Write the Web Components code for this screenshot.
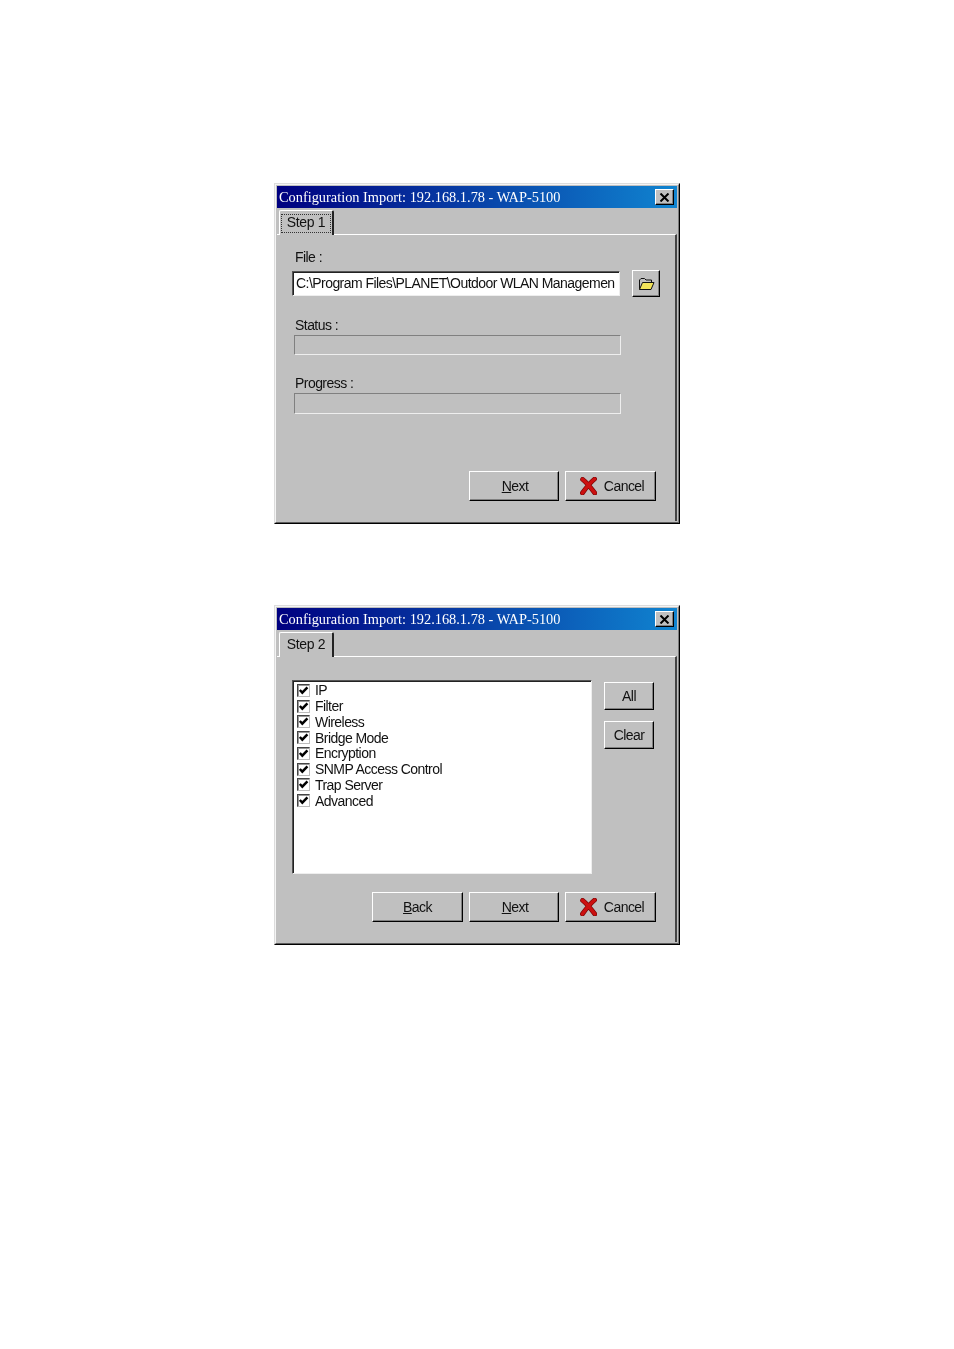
<!DOCTYPE html>
<html>
<head>
<meta charset="utf-8">
<style>
  html, body { margin: 0; background: #fff; }
  body { height: 1349px; font-family: "Liberation Sans", Arial, sans-serif; }
  .page { display: flex; flex-direction: column; align-items: center; padding-top: 183px; gap: 81px; }
</style>
</head>
<body>
<div class="page">
  <config-dialog heading="Configuration Import: 192.168.1.78 - WAP-5100" tab="Step 1" focused style="height:341px">
    <step-one></step-one>
  </config-dialog>
  <config-dialog heading="Configuration Import: 192.168.1.78 - WAP-5100" tab="Step 2" style="height:340px">
    <step-two></step-two>
  </config-dialog>
</div>

<script>
const dialogTemplate = document.createElement('template');
dialogTemplate.innerHTML = `
  <style>
    :host{
      display: flex;
      width: 406px;
      box-sizing: border-box;
      background: #c0c0c0;
      border: 1px solid;
      border-color: #dcdcdc #000 #000 #dcdcdc;
      font-family: "Liberation Sans", Arial, sans-serif;
      filter: blur(.35px);
    }
    .frame{
      flex: 1;
      display: flex;
      flex-direction: column;
      border: 1px solid;
      border-color: #f4f4f4 #7c7c7c #5c5c5c #f4f4f4;
      padding: 1px 1px 1px 1px;
      min-width: 0;
    }
    .title{
      height: 22px;
      flex: none;
      display: flex;
      align-items: center;
      justify-content: space-between;
      padding: 0 3px 0 2px;
      background: linear-gradient(90deg, #000080, #1084d0);
      color: #fff;
      font: 14.35px/22px "Liberation Serif", serif;
      white-space: nowrap;
    }
    .close{
      width: 19px;
      height: 16px;
      box-sizing: border-box;
      display: flex;
      align-items: center;
      justify-content: center;
      background: #c0c0c0;
      border: 1px solid;
      border-color: #fff #000 #000 #fff;
      box-shadow: inset -1px -1px 0 #808080;
    }
    .tabs{
      height: 26px;
      flex: none;
      display: flex;
      align-items: flex-end;
      padding-left: 2px;
    }
    .tab{
      width: 55px;
      height: 25px;
      box-sizing: border-box;
      display: flex;
      align-items: center;
      justify-content: center;
      border-top: 1px solid #fff;
      border-left: 1px solid #fff;
      border-right: 2px solid #222;
      border-radius: 2px 2px 0 0;
      font-size: 14px;
      color: #111;
      letter-spacing: -.3px;
      position: relative;
      top: 1px;
      background: #c0c0c0;
    }
    .tab span{
      width: 50px;
      height: 19px;
      line-height: 15px;
      text-align: center;
      box-sizing: border-box;
      border: 1px dotted transparent;
    }
    :host([focused]) .tab span{
      border-color: #333;
    }
    .panel{
      flex: 1;
      display: flex;
      flex-direction: column;
      border-top: 1px solid #fff;
      border-right: 2px solid #444;
      min-height: 0;
    }
  </style>
  <div class="frame">
    <div class="title">
      <span class="heading"></span>
      <span class="close">
        <svg width="11" height="9" viewBox="0 0 11 9"><path d="M1.5 .5l8 8M9.5 .5l-8 8" stroke="#000" stroke-width="2" fill="none"/></svg>
      </span>
    </div>
    <div class="tabs"><div class="tab"><span class="tabName"></span></div></div>
    <div class="panel"><slot></slot></div>
  </div>
`;

class ConfigDialog extends HTMLElement {
  constructor() {
    super();
    this.attachShadow({ mode: 'open' });
    this.shadowRoot.appendChild(document.importNode(dialogTemplate.content, true));
    this.shadowRoot.querySelector('.heading').textContent = this.getAttribute('heading');
    this.shadowRoot.querySelector('.tabName').textContent = this.getAttribute('tab');
  }
}

const buttonTemplate = document.createElement('template');
buttonTemplate.innerHTML = `
  <style>
    :host{
      display: inline-flex;
      box-sizing: border-box;
      align-items: center;
      justify-content: center;
      gap: 7px;
      width: 90px;
      height: 30px;
      background: #c0c0c0;
      border: 1px solid;
      border-color: #fff #000 #000 #fff;
      box-shadow: inset -1px -1px 0 #808080;
      font: 14px "Liberation Sans", Arial, sans-serif;
      letter-spacing: -.55px;
      color: #111;
      flex: none;
    }
  </style>
  <slot></slot>
`;

class DlgButton extends HTMLElement {
  constructor() {
    super();
    this.attachShadow({ mode: 'open' });
    this.shadowRoot.appendChild(document.importNode(buttonTemplate.content, true));
  }
}

const checkTemplate = document.createElement('template');
checkTemplate.innerHTML = `
  <style>
    :host{
      display: flex;
      align-items: center;
      height: 15.75px;
      gap: 5px;
      font: 14px "Liberation Sans", Arial, sans-serif;
      letter-spacing: -.55px;
      color: #111;
      white-space: nowrap;
    }
    .box{
      width: 13px;
      height: 13px;
      flex: none;
      box-sizing: border-box;
      background: #fff;
      border: 1px solid;
      border-color: #444 #bbb #bbb #444;
      box-shadow: inset 1px 1px 0 #999;
      display: flex;
      align-items: center;
      justify-content: center;
    }
  </style>
  <span class="box">
    <svg width="11" height="11" viewBox="0 0 11 11"><path d="M1.8 5l2.5 2.6L9.4 2.4" stroke="#000" stroke-width="2.5" fill="none"/></svg>
  </span>
  <slot></slot>
`;

class CheckRow extends HTMLElement {
  constructor() {
    super();
    this.attachShadow({ mode: 'open' });
    this.shadowRoot.appendChild(document.importNode(checkTemplate.content, true));
  }
}

const cancelIcon = `<svg width="17" height="18" viewBox="0 0 17 18" style="flex:none">
  <path d="M2.6 2.4C6 5 11 11 14.8 16M14.6 2C11 5 6 11 2.4 16" stroke="#7a0808" stroke-width="4.8" fill="none" stroke-linecap="round"/>
  <path d="M2.6 2.4C6 5 11 11 14.8 16M14.6 2C11 5 6 11 2.4 16" stroke="#cc1010" stroke-width="3.4" fill="none" stroke-linecap="round"/>
</svg>`;

const stepOneTemplate = document.createElement('template');
stepOneTemplate.innerHTML = `
  <style>
    :host{
      display: flex;
      flex-direction: column;
      height: 100%;
      box-sizing: border-box;
      padding: 14px 19px 20px 0;
      font: 14px "Liberation Sans", Arial, sans-serif;
      color: #111;
    }
    .label{
      height: 16px;
      line-height: 16px;
      margin-left: 18px;
      letter-spacing: -.55px;
    }
    .fileRow{
      display: flex;
      margin: 6px -4px 0 15px;
      align-items: flex-start;
      gap: 12px;
    }
    .input{
      width: 328px;
      height: 25px;
      flex: none;
      box-sizing: border-box;
      background: #fff;
      border: 1px solid;
      border-color: #555 #eee #eee #555;
      box-shadow: inset 1px 1px 0 #222;
      padding: 0 2px 0 3px;
      line-height: 23px;
      white-space: nowrap;
      letter-spacing: -.55px;
    }
    .browse{
      width: 28px;
      height: 27px;
      flex: none;
      margin-top: -1px;
      box-sizing: border-box;
      display: flex;
      align-items: center;
      justify-content: center;
      border: 1px solid;
      border-color: #fff #000 #000 #fff;
      box-shadow: inset -1px -1px 0 #808080;
    }
    .field{
      width: 327px;
      box-sizing: border-box;
      margin: 2px 0 0 17px;
      border: 1px solid;
      border-color: #808080 #eee #eee #808080;
      flex: none;
    }
    .status{ margin-top: 20px; }
    .progress{ margin-top: 20px; }
    .buttons{
      margin-top: auto;
      display: flex;
      justify-content: flex-end;
      gap: 6px;
    }
    .next{ padding-left: 2px; }
    .wide{ width: 91px; padding-left: 3px; }
  </style>
  <span class="label">File :</span>
  <div class="fileRow">
    <div class="input">C:\\Program Files\\PLANET\\Outdoor WLAN Managemen</div>
    <div class="browse">
      <svg width="17" height="14" viewBox="0 0 17 14">
        <path d="M1.5 12.5V3L3 1.5H6.5L8 3H13.5V5.5" fill="#c0c0c0" stroke="#111" stroke-width="1"/>
        <path d="M1.5 12.5L4.5 5.5H16L13 12.5Z" fill="#f2e45a" stroke="#111" stroke-width="1"/>
      </svg>
    </div>
  </div>
  <span class="label status">Status :</span>
  <div class="field" style="height:20px"></div>
  <span class="label progress">Progress :</span>
  <div class="field" style="height:21px"></div>
  <div class="buttons">
    <dlg-button class="next"><span><u>N</u>ext</span></dlg-button>
    <dlg-button class="wide">${cancelIcon}<span>Cancel</span></dlg-button>
  </div>
`;

class StepOne extends HTMLElement {
  constructor() {
    super();
    this.attachShadow({ mode: 'open' });
    this.shadowRoot.appendChild(document.importNode(stepOneTemplate.content, true));
  }
}

const stepTwoTemplate = document.createElement('template');
stepTwoTemplate.innerHTML = `
  <style>
    :host{
      display: flex;
      flex-direction: column;
      height: 100%;
      box-sizing: border-box;
      padding: 23px 19px 20px 15px;
    }
    .top{
      display: flex;
      gap: 12px;
      align-items: flex-start;
    }
    .list{
      width: 300px;
      height: 194px;
      box-sizing: border-box;
      background: #fff;
      border: 1px solid;
      border-color: #555 #eee #eee #555;
      box-shadow: inset 1px 1px 0 #222;
      padding: 1.4px 0 0 4px;
    }
    .side{
      display: flex;
      flex-direction: column;
      gap: 11px;
      margin-top: 2px;
    }
    .side dlg-button{
      width: 50px;
      height: 28px;
    }
    .buttons{
      margin-top: auto;
      display: flex;
      justify-content: flex-end;
      gap: 6px;
    }
    .next{ padding-left: 2px; }
    .wide{ width: 91px; }
    .cancel{ padding-left: 3px; }
  </style>
  <div class="top">
    <div class="list">
      <check-row>IP</check-row>
      <check-row>Filter</check-row>
      <check-row>Wireless</check-row>
      <check-row>Bridge Mode</check-row>
      <check-row>Encryption</check-row>
      <check-row>SNMP Access Control</check-row>
      <check-row>Trap Server</check-row>
      <check-row>Advanced</check-row>
    </div>
    <div class="side">
      <dlg-button>All</dlg-button>
      <dlg-button>Clear</dlg-button>
    </div>
  </div>
  <div class="buttons">
    <dlg-button class="wide"><span><u>B</u>ack</span></dlg-button>
    <dlg-button class="next"><span><u>N</u>ext</span></dlg-button>
    <dlg-button class="wide cancel">${cancelIcon}<span>Cancel</span></dlg-button>
  </div>
`;

class StepTwo extends HTMLElement {
  constructor() {
    super();
    this.attachShadow({ mode: 'open' });
    this.shadowRoot.appendChild(document.importNode(stepTwoTemplate.content, true));
  }
}

window.customElements.define('dlg-button', DlgButton);
window.customElements.define('check-row', CheckRow);
window.customElements.define('step-one', StepOne);
window.customElements.define('step-two', StepTwo);
window.customElements.define('config-dialog', ConfigDialog);
</script>
</body>
</html>
